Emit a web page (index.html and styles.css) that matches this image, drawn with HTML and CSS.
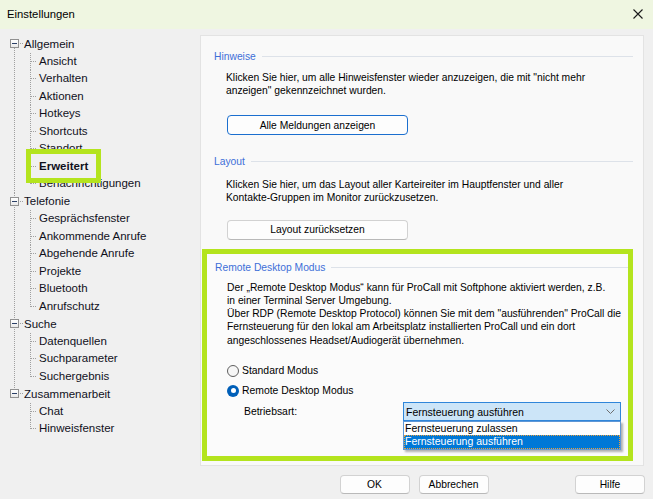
FILE: index.html
```html
<!DOCTYPE html>
<html lang="de">
<head>
<meta charset="utf-8">
<title>Einstellungen</title>
<link rel="stylesheet" href="styles.css">
</head>
<body>
<div class="window">
  <header class="titlebar">
    <span class="title">Einstellungen</span>
    <span class="close" aria-label="Schließen">
      <svg width="10" height="10" viewBox="0 0 10 10"><path d="M0.5 0.5 L9.5 9.5 M9.5 0.5 L0.5 9.5" stroke="#1a1a1a" stroke-width="1.1" fill="none"/></svg>
    </span>
  </header>

  <div class="content">
    <nav class="tree">
      <ul class="roots">
        <li class="root first">
          <div class="row"><span class="toggle"></span><span class="label">Allgemein</span></div>
          <ul class="children">
            <li>Ansicht</li>
            <li>Verhalten</li>
            <li>Aktionen</li>
            <li>Hotkeys</li>
            <li>Shortcuts</li>
            <li>Standort</li>
            <li class="marked"><b>Erweitert</b><span class="mark"></span></li>
            <li class="last">Benachrichtigungen</li>
          </ul>
        </li>
        <li class="root">
          <div class="row"><span class="toggle"></span><span class="label">Telefonie</span></div>
          <ul class="children">
            <li>Gesprächsfenster</li>
            <li>Ankommende Anrufe</li>
            <li>Abgehende Anrufe</li>
            <li>Projekte</li>
            <li>Bluetooth</li>
            <li class="last">Anrufschutz</li>
          </ul>
        </li>
        <li class="root">
          <div class="row"><span class="toggle"></span><span class="label">Suche</span></div>
          <ul class="children">
            <li>Datenquellen</li>
            <li>Suchparameter</li>
            <li class="last">Suchergebnis</li>
          </ul>
        </li>
        <li class="root last">
          <div class="row"><span class="toggle"></span><span class="label">Zusammenarbeit</span></div>
          <ul class="children">
            <li>Chat</li>
            <li class="last">Hinweisfenster</li>
          </ul>
        </li>
      </ul>
    </nav>

    <main class="panel">
      <section class="group hints">
        <div class="group-head"><span>Hinweise</span></div>
        <p class="desc">Klicken Sie hier, um alle Hinweisfenster wieder anzuzeigen, die mit "nicht mehr<br>anzeigen" gekennzeichnet wurden.</p>
        <button class="btn default wide">Alle Meldungen anzeigen</button>
      </section>

      <section class="group layout">
        <div class="group-head"><span>Layout</span></div>
        <p class="desc">Klicken Sie hier, um das Layout aller Karteireiter im Hauptfenster und aller<br>Kontakte-Gruppen im Monitor zurückzusetzen.</p>
        <button class="btn wide">Layout zurücksetzen</button>
      </section>

      <section class="group remote">
        <div class="group-head"><span>Remote Desktop Modus</span></div>
        <p class="desc remote-desc">Der „Remote Desktop Modus“ kann für ProCall mit Softphone aktiviert werden, z.B.<br>in einer Terminal Server Umgebung.<br>Über RDP (Remote Desktop Protocol) können Sie mit dem "ausführenden" ProCall die<br>Fernsteuerung für den lokal am Arbeitsplatz installierten ProCall und ein dort<br>angeschlossenes Headset/Audiogerät übernehmen.</p>
        <div class="radio first-radio"><span class="dot"></span><span>Standard Modus</span></div>
        <div class="radio checked"><span class="dot"></span><span>Remote Desktop Modus</span></div>
        <div class="mode-row">
          <span class="mode-label">Betriebsart:</span>
          <div class="combo">
            <span>Fernsteuerung ausführen</span>
            <svg class="chev" width="9" height="5" viewBox="0 0 9 5"><path d="M0.5 0.5 L4.5 4.5 L8.5 0.5" stroke="#6e6e6e" stroke-width="1" fill="none"/></svg>
            <ul class="dropdown">
              <li>Fernsteuerung zulassen</li>
              <li class="selected">Fernsteuerung ausführen</li>
            </ul>
          </div>
        </div>
      </section>
    </main>
  </div>

  <footer class="actions">
    <button class="btn act">OK</button>
    <button class="btn act">Abbrechen</button>
    <button class="btn act help">Hilfe</button>
  </footer>
</div>
</body>
</html>
```

FILE: styles.css
```css
* { box-sizing: border-box; }

html, body {
  margin: 0;
  padding: 0;
}

body {
  width: 653px;
  height: 499px;
  overflow: hidden;
  background: #f0f0f0;
  font-family: "Liberation Sans", Arial, sans-serif;
  color: #000;
}

.window {
  width: 653px;
  height: 499px;
  display: flex;
  flex-direction: column;
}

/* Title bar */
.titlebar {
  height: 29px;
  flex: none;
  display: flex;
  align-items: center;
  justify-content: space-between;
  background: #eff6e1;
  padding: 0 10px 2px 7px;
}

.title {
  font-size: 11.3px;
}

.close {
  display: flex;
  width: 10px;
  height: 10px;
}

/* Content row */
.content {
  display: flex;
  margin-top: 6px;
}

/* Tree */
.tree {
  width: 200px;
  flex: none;
  padding-left: 10px;
  font-size: 11.5px;
  color: #10101c;
}

.tree ul {
  list-style: none;
  margin: 0;
  padding: 0;
}

.root {
  background: repeating-linear-gradient(to bottom, #a0a0a0 0 1px, transparent 1px 2px) 4px 0 / 1px 100% no-repeat;
}

.root.first {
  background-position: 4px 9px;
  background-size: 1px calc(100% - 9px);
}

.root.last {
  background-size: 1px 9px;
}

.row {
  height: 17.5px;
  display: flex;
  align-items: center;
  background: repeating-linear-gradient(to right, #a0a0a0 0 1px, transparent 1px 2px) 10px 8px / 4px 1px no-repeat;
}

.toggle {
  width: 9px;
  height: 9px;
  border: 1px solid #919191;
  background: linear-gradient(#ffffff, #e9e9e9);
  margin-right: 5px;
  display: flex;
  align-items: center;
  justify-content: center;
}

.toggle::before {
  content: "";
  width: 5px;
  height: 1px;
  background: #2a3f66;
}

.children {
  margin-left: 20px !important;
}

.children li {
  height: 17.5px;
  line-height: 17.5px;
  padding-left: 9px;
  white-space: nowrap;
  background:
    repeating-linear-gradient(to bottom, #a0a0a0 0 1px, transparent 1px 2px) 0 0 / 1px 100% no-repeat,
    repeating-linear-gradient(to right, #a0a0a0 0 1px, transparent 1px 2px) 1px 8px / 6px 1px no-repeat;
}

.children li.last {
  background-size: 1px 9px, 6px 1px;
}

.marked {
  position: relative;
}

.marked b {
  font-weight: bold;
}

.mark {
  position: absolute;
  left: -4px;
  top: -8.5px;
  width: 75px;
  height: 34px;
  border: 5px solid #b4e41e;
}

/* Right panel */
.panel {
  width: 444px;
  height: 431px;
  flex: none;
  background: #f9f9f9;
  border: 1px solid #e3e3e3;
  padding: 13px 10px 0 13px;
}

.group-head {
  display: flex;
  align-items: center;
  height: 14px;
  font-size: 10.3px;
  color: #3e6fd8;
}

.group-head::after {
  content: "";
  flex: 1;
  height: 1px;
  margin-left: 6px;
  background: #dde2e9;
}

.desc {
  margin: 8px 0 0 12px;
  font-size: 10.3px;
  line-height: 13px;
  white-space: nowrap;
}

.btn {
  font-family: inherit;
  font-size: 10.3px;
  color: #000;
  background: #fdfdfd;
  border: 1px solid #d2d2d2;
  border-bottom-color: #b9b9b9;
  border-radius: 4px;
  padding: 0;
  display: flex;
  align-items: center;
  justify-content: center;
}

.btn.wide {
  width: 181px;
  height: 20px;
  margin-left: 13px;
}

.btn.default {
  border: 1px solid #1b6fcf;
}

.hints .btn {
  margin-top: 18px;
}

.layout {
  margin-top: 19.5px;
}

.layout .desc {
  margin-top: 9px;
}

.layout .btn {
  margin-top: 16px;
}

/* Remote group (highlighted) */
.remote {
  margin: 9px 0 0 -12px;
  border: 5px solid #b4e41e;
  background: #fbfbfb;
  padding: 7px 0 35px 8px;
}

.remote-desc {
  margin-top: 6px;
  font-size: 10.3px;
  line-height: 13.3px;
}

.radio {
  height: 16px;
  display: flex;
  align-items: center;
  margin-left: 12px;
  font-size: 10.4px;
  gap: 3px;
}

.first-radio {
  margin-top: 16px;
}

.radio.checked {
  margin-top: 4px;
}

.dot {
  width: 12px;
  height: 12px;
  border-radius: 50%;
  border: 1px solid #5f5f5f;
  background: #f6f6f6;
  display: flex;
  align-items: center;
  justify-content: center;
}

.radio.checked .dot {
  border: none;
  background: #005fb8;
}

.radio.checked .dot::before {
  content: "";
  width: 5px;
  height: 5px;
  border-radius: 50%;
  background: #fff;
}

.mode-row {
  display: grid;
  grid-template-columns: 159px 218px;
  align-items: center;
  margin: 3.5px 0 0 29px;
  font-size: 10.4px;
}

.combo {
  position: relative;
  height: 19px;
  border: 1px solid #2f86da;
  background: #cce5f8;
  display: flex;
  align-items: center;
  justify-content: space-between;
  padding: 0 3px 0 2px;
  font-size: 10.5px;
}

.chev {
  margin-right: 2px;
}

.dropdown {
  position: absolute;
  left: -1px;
  top: 18px;
  width: 218px;
  margin: 0;
  padding: 0;
  list-style: none;
  background: #fff;
  border: 1px solid #5e97d6;
  box-shadow: 2px 2px 2px rgba(0, 0, 0, 0.3);
  font-size: 10.5px;
}

.dropdown li {
  height: 13px;
  line-height: 13px;
  padding-left: 1px;
  white-space: nowrap;
}

.dropdown li.selected {
  background: #0078d7;
  color: #fff;
  outline: 1px dotted #e8a040;
  outline-offset: -1px;
  height: 13.5px;
}

/* Bottom buttons */
.actions {
  display: flex;
  margin-top: 8.5px;
  padding: 0 8px 0 339.5px;
  gap: 9px;
}

.btn.act {
  width: 70px;
  height: 19.5px;
}

.btn.help {
  margin-left: auto;
}
```
